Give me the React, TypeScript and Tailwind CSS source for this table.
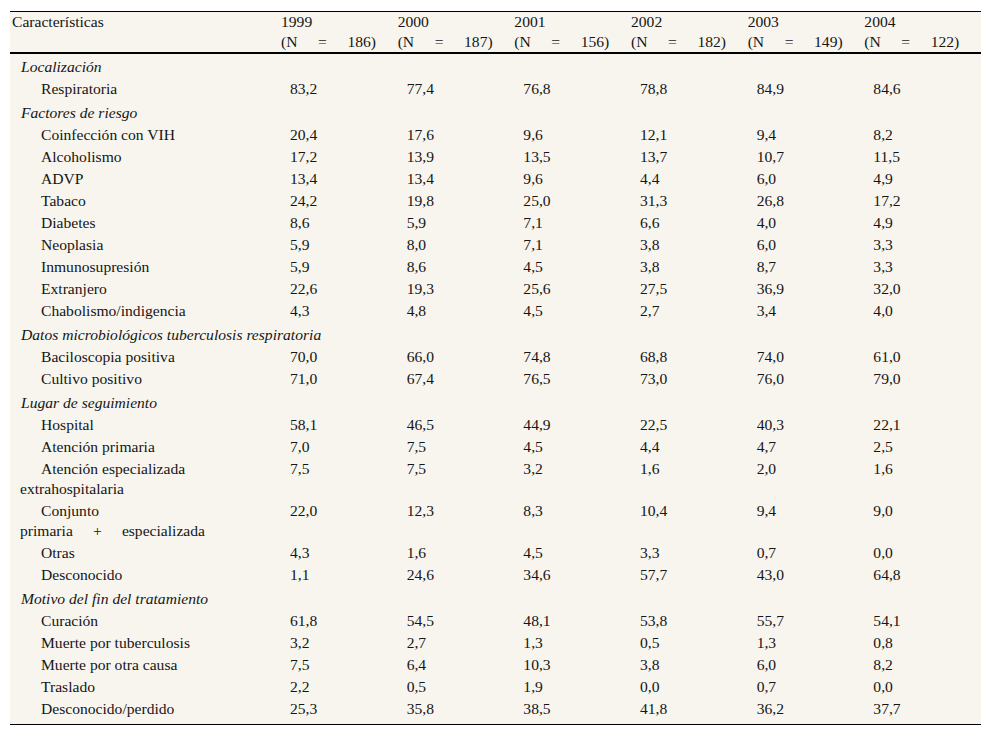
const years = [
  { y: "1999", n: "186" },
  { y: "2000", n: "187" },
  { y: "2001", n: "156" },
  { y: "2002", n: "182" },
  { y: "2003", n: "149" },
  { y: "2004", n: "122" },
];

type Row = { label: string; cont?: string; spread?: string[]; values: string[] };
type Section = { title: string; rows: Row[] };

const sections: Section[] = [
  {
    title: "Localización",
    rows: [{ label: "Respiratoria", values: ["83,2", "77,4", "76,8", "78,8", "84,9", "84,6"] }],
  },
  {
    title: "Factores de riesgo",
    rows: [
      { label: "Coinfección con VIH", values: ["20,4", "17,6", "9,6", "12,1", "9,4", "8,2"] },
      { label: "Alcoholismo", values: ["17,2", "13,9", "13,5", "13,7", "10,7", "11,5"] },
      { label: "ADVP", values: ["13,4", "13,4", "9,6", "4,4", "6,0", "4,9"] },
      { label: "Tabaco", values: ["24,2", "19,8", "25,0", "31,3", "26,8", "17,2"] },
      { label: "Diabetes", values: ["8,6", "5,9", "7,1", "6,6", "4,0", "4,9"] },
      { label: "Neoplasia", values: ["5,9", "8,0", "7,1", "3,8", "6,0", "3,3"] },
      { label: "Inmunosupresión", values: ["5,9", "8,6", "4,5", "3,8", "8,7", "3,3"] },
      { label: "Extranjero", values: ["22,6", "19,3", "25,6", "27,5", "36,9", "32,0"] },
      { label: "Chabolismo/indigencia", values: ["4,3", "4,8", "4,5", "2,7", "3,4", "4,0"] },
    ],
  },
  {
    title: "Datos microbiológicos tuberculosis respiratoria",
    rows: [
      { label: "Baciloscopia positiva", values: ["70,0", "66,0", "74,8", "68,8", "74,0", "61,0"] },
      { label: "Cultivo positivo", values: ["71,0", "67,4", "76,5", "73,0", "76,0", "79,0"] },
    ],
  },
  {
    title: "Lugar de seguimiento",
    rows: [
      { label: "Hospital", values: ["58,1", "46,5", "44,9", "22,5", "40,3", "22,1"] },
      { label: "Atención primaria", values: ["7,0", "7,5", "4,5", "4,4", "4,7", "2,5"] },
      {
        label: "Atención especializada",
        cont: "extrahospitalaria",
        values: ["7,5", "7,5", "3,2", "1,6", "2,0", "1,6"],
      },
      {
        label: "Conjunto",
        spread: ["primaria", "+", "especializada"],
        values: ["22,0", "12,3", "8,3", "10,4", "9,4", "9,0"],
      },
      { label: "Otras", values: ["4,3", "1,6", "4,5", "3,3", "0,7", "0,0"] },
      { label: "Desconocido", values: ["1,1", "24,6", "34,6", "57,7", "43,0", "64,8"] },
    ],
  },
  {
    title: "Motivo del fin del tratamiento",
    rows: [
      { label: "Curación", values: ["61,8", "54,5", "48,1", "53,8", "55,7", "54,1"] },
      { label: "Muerte por tuberculosis", values: ["3,2", "2,7", "1,3", "0,5", "1,3", "0,8"] },
      { label: "Muerte por otra causa", values: ["7,5", "6,4", "10,3", "3,8", "6,0", "8,2"] },
      { label: "Traslado", values: ["2,2", "0,5", "1,9", "0,0", "0,7", "0,0"] },
      { label: "Desconocido/perdido", values: ["25,3", "35,8", "38,5", "41,8", "36,2", "37,7"] },
    ],
  },
];

export default function App() {
  return (
    <div className="min-h-screen bg-white pt-[11px] pl-[10px] font-[family-name:'Liberation_Serif',serif] text-[15.6px] leading-[20px] text-[#151515]">
      <div className="w-[971px] border-t border-b border-black bg-[#f8f5ef] pb-[4px]">
        <div className="grid grid-cols-[271px_repeat(6,1fr)] border-b-2 border-black">
          <div className="pl-[2px]">Características</div>
          {years.map((c) => (
            <div key={c.y}>
              <div>{c.y}</div>
              <div className="flex w-[95px] justify-between">
                <span>(N</span>
                <span>=</span>
                <span>{c.n})</span>
              </div>
            </div>
          ))}
        </div>

        {sections.map((s) => (
          <div key={s.title}>
            <div className="pl-[11px] pt-[3px] pb-[1px] italic">{s.title}</div>
            {s.rows.map((r) => (
              <div key={r.label} className="grid grid-cols-[271px_repeat(6,1fr)] py-[1px]">
                <div className="pl-[10px]">
                  <div className="pl-[21px]">{r.label}</div>
                  {r.cont && <div>{r.cont}</div>}
                  {r.spread && (
                    <div className="flex w-[185px] justify-between">
                      {r.spread.map((w) => (
                        <span key={w}>{w}</span>
                      ))}
                    </div>
                  )}
                </div>
                {r.values.map((v, i) => (
                  <div key={i} className="pl-[9px]">
                    {v}
                  </div>
                ))}
              </div>
            ))}
          </div>
        ))}
      </div>
    </div>
  );
}
